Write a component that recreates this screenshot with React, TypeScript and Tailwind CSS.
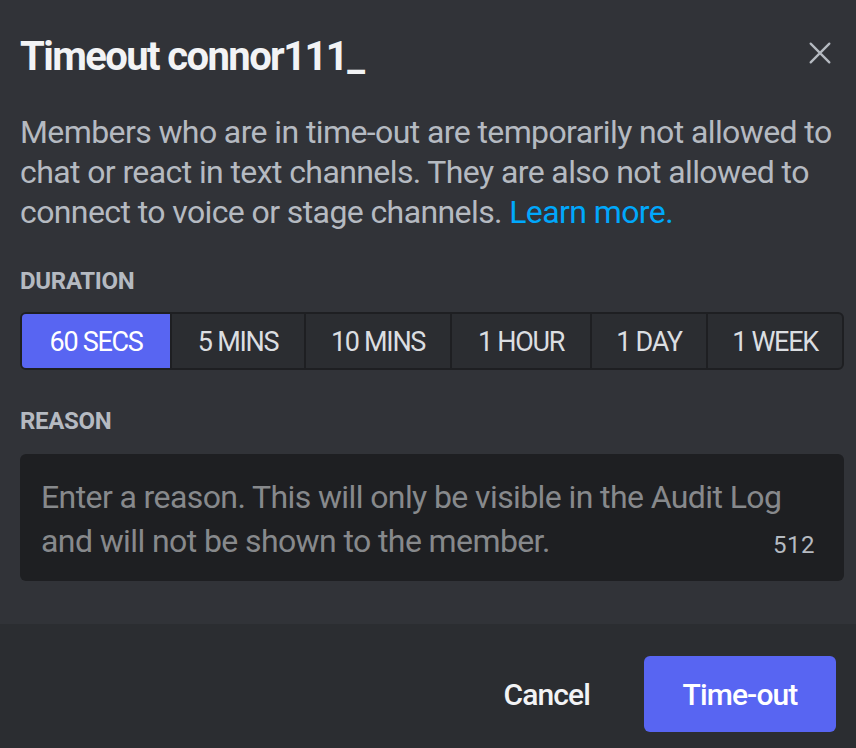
const segments: [string, string][] = [
  ["60 SECS", "w-[148px]"],
  ["5 MINS", "w-[134px]"],
  ["10 MINS", "w-[146px]"],
  ["1 HOUR", "w-[140px]"],
  ["1 DAY", "w-[116px]"],
  ["1 WEEK", "w-[136px]"],
];

export default function App() {
  return (
    <div className="w-[856px] h-[748px] overflow-hidden bg-[#313338] flex flex-col font-['Roboto',sans-serif]">
      <div className="flex-1 pl-[20px] pr-[12px] pt-[28px]">
        <div className="flex items-start justify-between">
          <h1 className="text-[40px] leading-[58px] font-bold tracking-[-1.6px] text-[#f2f3f5]">Timeout connor111_</h1>
          <button className="mt-[9px] mr-[8px] text-[#b5bac1]" aria-label="Close">
            <svg width="32" height="32" viewBox="0 0 24 24" fill="none" stroke="currentColor" strokeWidth="1.7" strokeLinecap="round">
              <path d="M5 5l14 14M19 5L5 19" />
            </svg>
          </button>
        </div>
        <p className="mt-[26px] text-[32px] leading-[40px] tracking-[-0.6px] text-[#b5bac1]">
          Members who are in time-out are temporarily not allowed to chat or react in text channels. They are also not
          allowed to connect to voice or stage channels. <span className="text-[#00a8fc]">Learn more.</span>
        </p>
        <div className="mt-[34px] text-[24px] leading-[30px] font-bold text-[#b5bac1] tracking-[-0.3px]">DURATION</div>
        <div className="mt-[16px] flex h-[58px] rounded-[6px] border-2 border-[#1e1f22] bg-[#2b2d31] overflow-hidden">
          {segments.map(([s, w], i) => (
            <div
              key={s}
              className={
                i === 0
                  ? `${w} shrink-0 flex items-center justify-center pt-[3px] whitespace-nowrap text-[27px] tracking-[-1.3px] text-white bg-[#5865f2]`
                  : `${w} shrink-0 flex items-center justify-center pt-[3px] whitespace-nowrap text-[27px] tracking-[-1.3px] text-[#dbdee1] border-l-2 border-[#1e1f22]`
              }
            >
              {s}
            </div>
          ))}
        </div>
        <div className="mt-[36px] text-[24px] leading-[30px] font-bold text-[#b5bac1] tracking-[-0.3px]">REASON</div>
        <div className="relative mt-[18px] h-[127px] rounded-[6px] bg-[#1e1f22]">
          <textarea
            className="w-full h-full resize-none bg-transparent outline-none px-[21px] pt-[21px] text-[32px] leading-[44px] tracking-[-0.6px] text-[#dbdee1] placeholder-[#87898c] font-['Roboto',sans-serif]"
            placeholder="Enter a reason. This will only be visible in the Audit Log and will not be shown to the member."
          />
          <span className="absolute right-[29px] bottom-[22px] text-[24px] leading-[28px] text-[#b5bac1] tracking-[0.5px]">512</span>
        </div>
      </div>
      <div className="h-[124px] shrink-0 bg-[#2b2d31] flex justify-end items-start pt-[32px] pr-[20px] gap-[14px]">
        <button className="h-[76px] px-[40px] text-[30px] font-medium text-[#f2f3f5] tracking-[-0.9px]">Cancel</button>
        <button className="h-[76px] w-[192px] rounded-[6px] bg-[#5865f2] text-[30px] font-medium text-white tracking-[-0.9px]">Time-out</button>
      </div>
    </div>
  );
}
